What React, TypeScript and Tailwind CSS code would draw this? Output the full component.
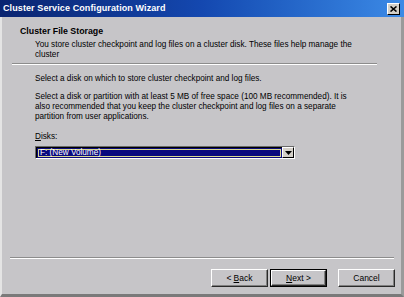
const FONT = "font-['Liberation_Sans',Arial,sans-serif]";

function Button({ children, isDefault = false }: { children: React.ReactNode; isDefault?: boolean }) {
  return (
    <div
      className={
        isDefault
          ? "w-[57px] h-[18px] border border-black"
          : "w-[57px] h-[18px]"
      }
    >
      <div className="h-full w-full border-t border-l border-t-white border-l-white border-b border-r border-b-[#2a2a2a] border-r-[#2a2a2a] bg-[#c6c5c8] flex items-center justify-center text-[8.5px] text-black shadow-[inset_-1px_-1px_0_#808080]">
        {children}
      </div>
    </div>
  );
}

export default function App() {
  return (
    <div className={`w-[404px] h-[297px] flex flex-col bg-[#c6c5c8] overflow-hidden ${FONT}`}>
      {/* title bar */}
      <div className="h-[17px] shrink-0 flex items-center justify-between pl-[3px] pr-[4px] bg-gradient-to-r from-[#0a2470] via-[#1448b0] to-[#3c8ae6]">
        <span className="text-[9px] font-bold text-white tracking-[0.1px]">
          Cluster Service Configuration Wizard
        </span>
        <div className="w-[13px] h-[12px] bg-[#d4d0c8] border-t border-l border-t-white border-l-white border-b border-r border-b-black border-r-black flex items-center justify-center">
          <svg width="7" height="6" viewBox="0 0 7 6">
            <path d="M0.5 0.5 L6.5 5.5 M6.5 0.5 L0.5 5.5" stroke="black" strokeWidth="1.6" />
          </svg>
        </div>
      </div>

      {/* window body */}
      <div className="flex-1 flex flex-col border-l-2 border-l-[#e4e4e4] border-r-[3px] border-r-[#9a9a9a] border-b-[3px] border-b-[#7a7a7a]">
        <div className="pl-[18px] pt-[9px] text-[8.2px] leading-[10px] text-black">
          <div className="font-bold text-[8.8px]">Cluster File Storage</div>
          <div className="pl-[15px] mt-[4px] w-[335px]">
            You store cluster checkpoint and log files on a cluster disk. These files help manage the
            cluster
          </div>
        </div>

        <div className="ml-[10px] w-[365px] mt-[3px] h-[2px] border-t border-t-[#8c8c8c] border-b border-b-white" />

        <div className="pl-[33px] text-[8.2px] leading-[10px] text-black">
          <div className="mt-[9px]">Select a disk on which to store cluster checkpoint and log files.</div>
          <div className="mt-[8px] w-[318px]">
            Select a disk or partition with at least 5 MB of free space (100 MB recommended). It is
            also recommended that you keep the cluster checkpoint and log files on a separate
            partition from user applications.
          </div>
          <div className="mt-[10px]">
            <span className="underline">D</span>isks:
          </div>
          <div className="mt-[4px] w-[260px] h-[13px] flex border-t border-l border-t-[#6a6a6a] border-l-[#6a6a6a] border-b border-r border-b-white border-r-white">
            <div className="flex-1 flex border-t border-l border-t-black border-l-black p-[1px] bg-[#0a0a7e]">
              <div className="flex-1 flex items-center border border-[#d8d890] pl-[1px] text-white text-[8.2px]">
                F: (New Volume)
              </div>
            </div>
            <div className="w-[12px] bg-[#d4d0c8] border-t border-l border-t-white border-l-white border-b border-r border-b-black border-r-black flex items-center justify-center">
              <svg width="7" height="4" viewBox="0 0 7 4">
                <path d="M0 0 H7 L3.5 4 Z" fill="black" />
              </svg>
            </div>
          </div>
        </div>

        <div className="flex-1" />

        <div className="ml-[8px] w-[384px] h-[2px] border-t border-t-[#8c8c8c] border-b border-b-white" />

        <div className="flex justify-end items-center gap-[2px] pr-[6px] pt-[10px] pb-[7px]">
          <Button>
            &lt; <span className="underline ml-[2px]">B</span>ack
          </Button>
          <Button isDefault>
            <span className="underline">N</span>ext &gt;
          </Button>
          <div className="w-[7px]" />
          <Button>Cancel</Button>
        </div>
      </div>
    </div>
  );
}
